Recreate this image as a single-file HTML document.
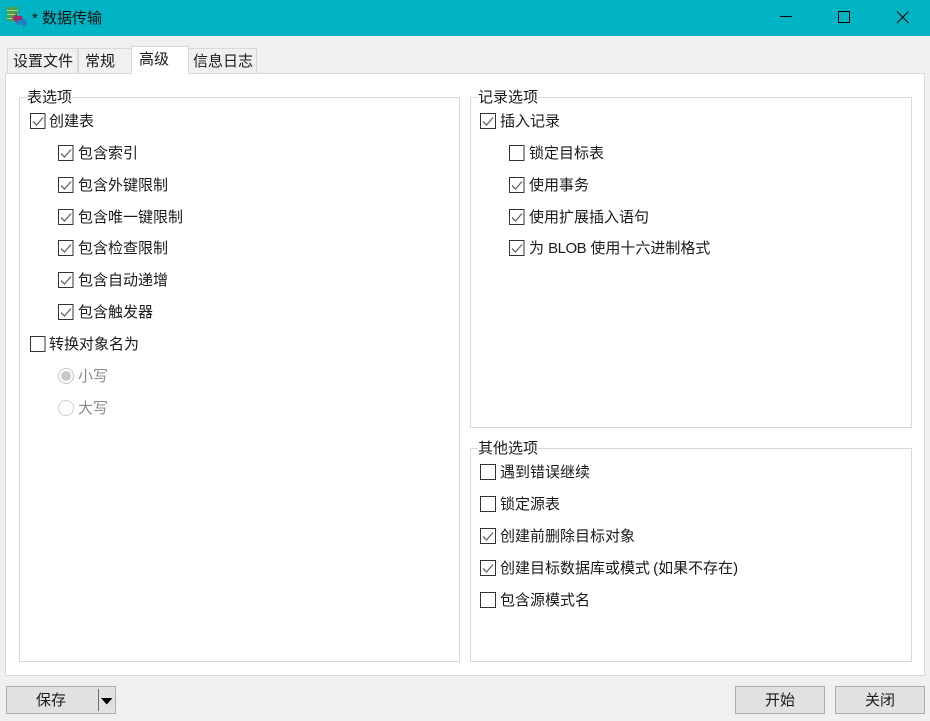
<!DOCTYPE html>
<html lang="zh">
<head>
<meta charset="utf-8">
<style>
html,body{margin:0;padding:0}
body{width:930px;height:721px;overflow:hidden;position:relative;background:#f0f0f0;font-family:"Liberation Sans","Noto Sans CJK SC",sans-serif;font-size:15px;color:#1a1a1a}
div,svg{position:absolute;box-sizing:border-box}
.t{white-space:nowrap;line-height:20px;height:20px}
.title{left:0;top:0;width:930px;height:36px;background:#00b4c4}
.panel{left:5px;top:73px;width:920px;height:603px;background:#fff;border:1px solid #d9d9d9}
.tab{top:48px;height:25px;background:#f0f0f0;border:1px solid #d9d9d9;border-bottom:none}
.grp{border:1px solid #d9d9d9}
.btn{top:686px;height:28px;background:#e1e1e1;border:1px solid #adadad;text-align:center;line-height:27px}
</style>
</head>
<body>
<div class="title"></div>
<div style="left:7px;top:7px;width:11px;height:14px;background:#4c9f45"></div>
<div style="left:7px;top:10px;width:11px;height:1px;background:#a9d892"></div>
<div style="left:7px;top:14px;width:11px;height:1px;background:#a9d892"></div>
<div style="left:7px;top:18px;width:11px;height:1px;background:#a9d892"></div>
<div style="left:17px;top:17px;width:11px;height:11px;background:#1b7fc0;clip-path:polygon(0 30%,50% 30%,50% 0,100% 50%,50% 100%,50% 70%,0 70%)"></div>
<div style="left:12px;top:13px;width:10px;height:10px;background:#a5286f;clip-path:polygon(0 50%,50% 0,50% 30%,100% 30%,100% 70%,50% 70%,50% 100%)"></div>
<div class="t" style="left:32px;top:9px;color:#111">* 数据传输</div>
<svg style="left:770px;top:0" width="160" height="36" viewBox="0 0 160 36" fill="none" stroke="#000" stroke-width="1">
<path d="M10 16.500h12"/>
<rect x="68.500" y="11.500" width="11" height="11"/>
<path d="M127 11.500l11.500 11.500M138.500 11.500l-11.500 11.500"/>
</svg>

<div class="panel"></div>
<div class="tab" style="left:7px;width:71px"></div>
<div class="tab" style="left:78px;width:54px"></div>
<div class="tab" style="left:188px;width:69px"></div>
<div style="left:131px;top:46px;width:58px;height:28px;background:#fff;border:1px solid #d9d9d9;border-bottom:none"></div>
<div class="t" style="left:13px;top:52px">设置文件</div>
<div class="t" style="left:85px;top:52px">常规</div>
<div class="t" style="left:139px;top:50px">高级</div>
<div class="t" style="left:193px;top:52px">信息日志</div>

<div class="grp" style="left:19px;top:97px;width:441px;height:565px"></div>
<div class="grp" style="left:470px;top:97px;width:442px;height:331px"></div>
<div class="grp" style="left:470px;top:448px;width:442px;height:214px"></div>
<div style="left:27px;top:92px;width:45px;height:10px;background:#fff"></div>
<div style="left:478px;top:92px;width:60px;height:10px;background:#fff"></div>
<div style="left:478px;top:443px;width:60px;height:10px;background:#fff"></div>
<div class="t" style="left:27px;top:88px">表选项</div>
<div class="t" style="left:478px;top:88px">记录选项</div>
<div class="t" style="left:478px;top:439px">其他选项</div>

<svg style="left:0;top:0" width="930" height="721" fill="none">
<g stroke="#333" fill="#fff">
<rect x="30.500" y="113.500" width="14.500" height="15"/>
<rect x="58.500" y="145.500" width="14.500" height="15"/>
<rect x="58.500" y="177.500" width="14.500" height="15"/>
<rect x="58.500" y="209.500" width="14.500" height="15"/>
<rect x="58.500" y="240.500" width="14.500" height="15"/>
<rect x="58.500" y="272.500" width="14.500" height="15"/>
<rect x="58.500" y="304.500" width="14.500" height="15"/>
<rect x="30.500" y="336.500" width="14.500" height="15"/>
<rect x="480.500" y="113.500" width="15" height="15"/>
<rect x="509.500" y="145.500" width="14.500" height="15"/>
<rect x="509.500" y="177.500" width="14.500" height="15"/>
<rect x="509.500" y="209.500" width="14.500" height="15"/>
<rect x="509.500" y="240.500" width="14.500" height="15"/>
<rect x="480.500" y="464.500" width="15" height="15"/>
<rect x="480.500" y="496.500" width="15" height="15"/>
<rect x="480.500" y="528.500" width="15" height="15"/>
<rect x="480.500" y="560.500" width="15" height="15"/>
<rect x="480.500" y="592.500" width="15" height="15"/>
</g>
<g stroke="#666" stroke-width="1.300">
<path d="M33 121.500l3.500 3.500 6.500-7.500"/>
<path d="M61 153.500l3.500 3.500 6.500-7.500"/>
<path d="M61 185.500l3.500 3.500 6.500-7.500"/>
<path d="M61 217.500l3.500 3.500 6.500-7.500"/>
<path d="M61 248.500l3.500 3.500 6.500-7.500"/>
<path d="M61 280.500l3.500 3.500 6.500-7.500"/>
<path d="M61 312.500l3.500 3.500 6.500-7.500"/>
<path d="M483 121.500l3.500 3.500 6.500-7.500"/>
<path d="M512 185.500l3.500 3.500 6.500-7.500"/>
<path d="M512 217.500l3.500 3.500 6.500-7.500"/>
<path d="M512 248.500l3.500 3.500 6.500-7.500"/>
<path d="M483 536.500l3.500 3.500 6.500-7.500"/>
<path d="M483 568.500l3.500 3.500 6.500-7.500"/>
</g>
<circle cx="66" cy="376" r="7.500" stroke="#c4c4c4" fill="#fff"/>
<circle cx="66" cy="376" r="5" fill="#c8c8c8"/>
<circle cx="66" cy="408" r="7.500" stroke="#cfcfcf" fill="#fff"/>
</svg>

<div class="t" style="left:49px;top:112px">创建表</div>
<div class="t" style="left:78px;top:144px">包含索引</div>
<div class="t" style="left:78px;top:176px">包含外键限制</div>
<div class="t" style="left:78px;top:208px">包含唯一键限制</div>
<div class="t" style="left:78px;top:239px">包含检查限制</div>
<div class="t" style="left:78px;top:271px">包含自动递增</div>
<div class="t" style="left:78px;top:303px">包含触发器</div>
<div class="t" style="left:49px;top:335px">转换对象名为</div>
<div class="t" style="left:78px;top:367px;color:#8a8a8a">小写</div>
<div class="t" style="left:78px;top:399px;color:#8a8a8a">大写</div>

<div class="t" style="left:500px;top:112px">插入记录</div>
<div class="t" style="left:529px;top:144px">锁定目标表</div>
<div class="t" style="left:529px;top:176px">使用事务</div>
<div class="t" style="left:529px;top:208px">使用扩展插入语句</div>
<div class="t" style="left:529px;top:239px">为 <i style="font-style:normal;letter-spacing:-.5px">BLOB</i> 使用十六进制格式</div>

<div class="t" style="left:500px;top:463px">遇到错误继续</div>
<div class="t" style="left:500px;top:495px">锁定源表</div>
<div class="t" style="left:500px;top:527px">创建前删除目标对象</div>
<div class="t" style="left:500px;top:559px;word-spacing:-1px">创建目标数据库或模式 (如果不存在)</div>
<div class="t" style="left:500px;top:591px">包含源模式名</div>

<div class="btn" style="left:6px;width:110px"></div>
<div class="t" style="left:36px;top:691px">保存</div>
<div style="left:98px;top:689px;width:1px;height:22px;background:#6e6e6e"></div>
<svg style="left:101px;top:698px" width="12" height="7" viewBox="0 0 12 7"><path d="M0 0h11.500L5.750 6.500z" fill="#000"/></svg>
<div class="btn" style="left:735px;width:90px">开始</div>
<div class="btn" style="left:835px;width:90px">关闭</div>
</body>
</html>
